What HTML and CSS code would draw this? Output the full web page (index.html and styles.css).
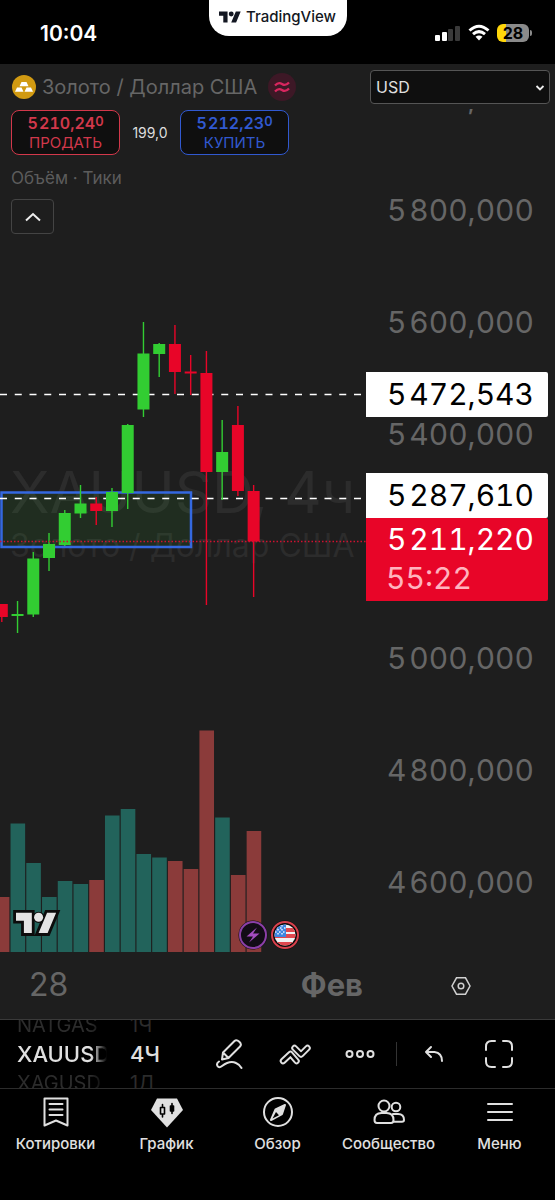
FILE: index.html
```html
<!DOCTYPE html>
<html lang="ru">
<head>
    <meta charset="UTF-8">
    <meta name="viewport" content="width=device-width, initial-scale=1.0">
    <title>XAUUSD, 4ч</title>
    <link rel="stylesheet" href="styles.css">
</head>
<body>
    <header class="status-bar">
        <div class="clock">10:04</div>
        <div class="notch">
            <svg width="22" height="14" viewBox="0 0 36 22" fill="#131722"><path d="M14 20H7V9H0V2h14zM28 20h-8l7.500-18h8z"/><circle cx="20" cy="6" r="4"/></svg>
            <span>TradingView</span>
        </div>
        <div class="status-icons">
            <svg width="26" height="18" viewBox="0 0 26 18" fill="#fff">
                <rect x="0" y="11" width="5" height="6" rx="1"/>
                <rect x="7" y="8" width="5" height="9" rx="1"/>
                <rect x="13" y="5" width="5" height="12" rx="1" fill="#3a3a3a"/>
                <rect x="20" y="2" width="5" height="15" rx="1" fill="#3a3a3a"/>
            </svg>
            <svg width="22" height="18" viewBox="0 0 22 18" fill="none" stroke="#fff" stroke-width="3">
                <path d="M1.500 6.500Q11-2 20.500 6.500M5 10.200Q11 5 17 10.200"/>
                <path d="M7.500 12.800Q11 10 14.500 12.800L11 16.500z" fill="#fff" stroke="none"/>
            </svg>
            <div class="battery">28</div>
        </div>
    </header>

    <main class="chart">
        <div class="plot">
            <div class="watermark">
                <div class="watermark-symbol">XAUUSD, 4ч</div>
                <div class="watermark-name">Золото / Доллар США</div>
            </div>
            <svg class="canvas" id="canvas">
                <g id="volume"></g>
                <rect x="1.500" y="428.500" width="189.500" height="54.500" fill="#32cd32" fill-opacity="0.09" stroke="#3468e0" stroke-width="2.500"/>
                <line x1="0" x2="99%" y1="330.500" y2="330.500" stroke="#fff" stroke-width="1.300" stroke-dasharray="7 7.750"/>
                <line x1="0" x2="99%" y1="434.500" y2="434.500" stroke="#fff" stroke-width="1.300" stroke-dasharray="7 7.750"/>
                <g id="candles"></g>
                <line x1="0" x2="100%" y1="477.500" y2="477.500" stroke="#d01030" stroke-width="1.300" stroke-dasharray="1.500 2"/>

                <!-- логотип -->
                <g transform="translate(16 846.500) scale(1.13)" fill="#e4e4e4" stroke="#0c0c0c" stroke-width="5" paint-order="stroke">
                    <path d="M14 20H7V9H0V2h14zM28 20h-8l7.500-18h8z"/><circle cx="20" cy="6" r="4" stroke-width="2"/>
                </g>

                <!-- события -->
                <g transform="translate(253 871)">
                    <circle r="14.500" fill="#101010"/>
                    <circle r="13" fill="#120c16" stroke="#8b3fa8" stroke-width="2"/>
                    <path d="M4-7.500-6.500 1.500H0L-4 7.500 6.500-1.500H0z" fill="#a34cc0"/>
                </g>
                <g transform="translate(285 871)">
                    <circle r="14.500" fill="#101010"/>
                    <circle r="13" fill="#0c0c0c" stroke="#d9414c" stroke-width="2"/>
                    <clipPath id="flag"><circle r="10.500"/></clipPath>
                    <g clip-path="url(#flag)">
                        <path d="M-11-11h22v22h-22z" fill="#f2f2f2"/>
                        <path d="M-11-7h22v4h-22zM-11-1h22v4h-22zM-11 7h22v4h-22z" fill="#e0484f"/>
                        <path d="M-11-11H1V2h-12z" fill="#3d86e0"/>
                        <path d="M-9-7H1M-10-3H1M-7-10V1M-3-10V1" stroke="#e8f0ff" stroke-width="1.500" stroke-dasharray="1.500 2.500"/>
                    </g>
                </g>
            </svg>

            <div class="legend">
                <div class="legend-title">
                    <svg width="26" height="26" viewBox="0 0 26 26">
                        <circle cx="13" cy="13" r="12" fill="#d19a12"/>
                        <path d="M10.500 8h5l2 4.200h-9zM6 13.500h4.500l2 4.200H4zM15.500 13.500H20l2 4.200h-8.500z" fill="#fff"/>
                    </svg>
                    <span>Золото / Доллар США</span>
                    <svg class="approx" width="28" height="28" viewBox="0 0 28 28">
                        <circle cx="14" cy="14" r="14" fill="#3d1826"/>
                        <path d="M7 12.500q3.500-4 7-1.500t7-1.500M7 18.500q3.500-4 7-1.500t7-1.500" fill="none" stroke="#d8265f" stroke-width="2.200"/>
                    </svg>
                </div>
                <div class="quotes">
                    <button class="quote sell"><b>5&#8202;210,24<sup>0</sup></b><span>ПРОДАТЬ</span></button>
                    <span class="spread">199,0</span>
                    <button class="quote buy"><b>5&#8202;212,23<sup>0</sup></b><span>КУПИТЬ</span></button>
                </div>
                <div class="indicator">Объём · Тики</div>
                <button class="collapse" aria-label="Свернуть">
                    <svg width="18" height="12" viewBox="0 0 18 12" fill="none" stroke="#eee" stroke-width="2"><path d="M2 9.500l7-6.500 7 6.500"/></svg>
                </button>
            </div>
        </div>

        <div class="price-scale">
            <div class="price">6&#8202;000,000</div>
            <div class="price">5&#8202;800,000</div>
            <div class="price">5&#8202;600,000</div>
            <div class="price">5&#8202;400,000</div>
            <div class="price"></div>
            <div class="price">5&#8202;000,000</div>
            <div class="price">4&#8202;800,000</div>
            <div class="price">4&#8202;600,000</div>
            <div class="tag" style="top: 308px">5&#8202;472,543</div>
            <div class="tag" style="top: 409px">5&#8202;287,610</div>
            <div class="tag last" style="top: 454px">5&#8202;211,220<span>55:22</span></div>
            <div class="currency">
                <select aria-label="Валюта"><option>USD</option></select>
                <svg width="10" height="6" viewBox="0 0 10 6" fill="none" stroke="#eee" stroke-width="1.800"><path d="M1.500 1L5 4.500 8.500 1"/></svg>
            </div>
        </div>

        <div class="time-scale">
            <span>28</span>
            <b>Фев</b>
        </div>
        <button class="scale-settings" aria-label="Настройки шкалы">
            <svg width="20" height="20" viewBox="0 0 20 20" fill="none" stroke="#d0d0d0" stroke-width="1.500"><path d="M5.500 1.800h9l4.500 8.200-4.500 8.200h-9L1 10z"/><circle cx="10" cy="10" r="2.800"/></svg>
        </button>
    </main>

    <div class="toolbar">
        <div class="picker symbol">
            <span>NATGAS</span>
            <strong>XAUUSD</strong>
            <span>XAGUSD</span>
        </div>
        <div class="picker interval">
            <span>1Ч</span>
            <strong>4Ч</strong>
            <span>1Д</span>
        </div>
        <button aria-label="Рисование">
            <svg width="30" height="32" viewBox="0 0 30 32"><path d="M7 21.500L8 14.500 19.500 3Q21.500 1.200 24.300 3.800T25 8.500L13.500 20zM8 14.500l5.500 5.500"/><path d="M4 23.500Q1 25.500 2.500 28T7 28Q15 22 21 25 24.500 26.500 26.500 30"/></svg>
        </button>
        <button aria-label="Индикаторы">
            <svg width="32" height="22" viewBox="0 0 32 22">
                <path d="M4 18l7.500-7 6 7M15.500 5l6.500 6.500L28.500 5" stroke-width="6.500"/>
                <path d="M4 18l7.500-7 6 7M15.500 5l6.500 6.500L28.500 5" stroke-width="2.600" class="cut"/>
            </svg>
        </button>
        <button aria-label="Ещё">
            <svg width="30" height="10" viewBox="0 0 30 10"><circle cx="4.500" cy="5" r="3"/><circle cx="15" cy="5" r="3"/><circle cx="25.500" cy="5" r="3"/></svg>
        </button>
        <div class="divider"></div>
        <button aria-label="Отменить">
            <svg width="20" height="18" viewBox="0 0 20 18"><path d="M7 2L2 7l5 5M2 7h8.500Q18 8 18 16"/></svg>
        </button>
        <button aria-label="Во весь экран">
            <svg width="30" height="30" viewBox="0 0 30 30"><path d="M2 11V7.500Q2 2 7.500 2H11M19 2h3.500Q28 2 28 7.500V11M28 19v3.500Q28 28 22.500 28H19M11 28H7.500Q2 28 2 22.500V19"/></svg>
        </button>
    </div>

    <nav class="tabs">
        <a href="#">
            <svg width="32" height="32" viewBox="0 0 32 32"><path d="M4.500 2.500h23v27L16 24.500 4.500 29.500zM9.500 8h13M9.500 13.500h13M9.500 19h13"/></svg>
            <span>Котировки</span>
        </a>
        <a href="#">
            <svg width="32" height="32" viewBox="0 0 32 32"><path d="M6 2.500h20l6 11.500-16 17.500L0 14z" fill="#e0e0e0" stroke="none"/><path d="M9.500 11.500h4v6.500h-4zM11.500 8.500v3M11.500 18v3" stroke="#000" stroke-width="1.600"/><path d="M19.500 10h3v5h-3zM21 7.500v10" fill="#000" stroke="#000" stroke-width="1.600"/></svg>
            <span>График</span>
        </a>
        <a href="#">
            <svg width="32" height="32" viewBox="0 0 32 32"><circle cx="16" cy="16" r="14"/><path d="M23 9l-3 9-11 6 4.500-10.500z" fill="#e0e0e0"/><path d="M10.500 22.500l3.500-6.500 3 3.200z" fill="#000" stroke="none"/></svg>
            <span>Обзор</span>
        </a>
        <a href="#">
            <svg width="32" height="32" viewBox="0 0 32 32"><circle cx="11" cy="10" r="5.500"/><circle cx="23" cy="11" r="4.300"/><path d="M1.500 24q0-7 7-7h5q7 0 7 7 0 3-2.500 3H4q-2.500 0-2.500-3zM20 18h5q6 0 6 6 0 1.800-2 1.800h-8.500"/></svg>
            <span>Сообщество</span>
        </a>
        <a href="#">
            <svg width="32" height="32" viewBox="0 0 32 32"><path d="M4 8h24M4 16h24M4 24h24"/></svg>
            <span>Меню</span>
        </a>
    </nav>

    <script>
        const UP = '#32cd32';
        const DOWN = '#e80528';
        const STEP = 15.74;
        const BOTTOM = 888;

        // [верх тени, верх тела, низ тела, низ тени, рост, верх объёма]
        const bars = [
            [540, 540, 553, 558, 0, 833],
            [537, 550, 552, 569, 1, 759.5],
            [488, 494.5, 550.5, 553, 1, 799],
            [469, 480, 494, 507, 1, 833],
            [446, 449, 481, 482, 1, 817],
            [421, 439.5, 449.5, 454, 1, 820],
            [433, 439.5, 447, 461, 0, 816],
            [424, 428, 447, 463, 1, 751.5],
            [360, 361, 429, 445, 1, 745],
            [258, 289.5, 345.5, 353, 1, 790],
            [279, 280, 290, 313, 1, 793.5],
            [261, 280, 308, 330, 0, 797],
            [291, 307.5, 309.5, 331, 0, 805],
            [287, 309, 408, 541, 0, 666.5],
            [356, 388, 408, 436, 1, 753.5],
            [342, 361, 427, 432, 0, 811],
            [421, 427, 477.5, 533, 0, 767]
        ];

        function addRect(parent, x, y, width, height, fill) {
            const rect = document.createElementNS('http://www.w3.org/2000/svg', 'rect');
            rect.setAttribute('x', x);
            rect.setAttribute('y', y);
            rect.setAttribute('width', width);
            rect.setAttribute('height', height);
            rect.setAttribute('fill', fill);
            parent.appendChild(rect);
        }

        const candles = document.getElementById('candles');
        const volume = document.getElementById('volume');

        bars.forEach(([high, top, bottom, low, up, vol], i) => {
            const center = 1.8 + STEP * i;
            const color = up ? UP : DOWN;
            addRect(candles, center - 0.7, high, 1.4, low - high, color);
            addRect(candles, center - 6, top, 12, bottom - top, color);
            addRect(volume, center - 7, vol, 14.6, BOTTOM - vol, up ? '#22635b' : '#8b3b3a');
        });
    </script>
</body>
</html>
```
FILE: styles.css
```css
* {
    margin: 0;
    padding: 0;
    box-sizing: border-box;
}

body {
    font-family: Inter, 'Liberation Sans', sans-serif;
    background-color: #000;
    color: #e0e0e0;
    min-height: 100vh;
    display: flex;
    flex-direction: column;
}

button {
    font: inherit;
    color: inherit;
    background: none;
    border: none;
    cursor: pointer;
}

svg {
    flex: none;
}

/* Строка состояния */
.status-bar {
    display: grid;
    grid-template-columns: 1fr 138px 1fr;
    height: 64px;
    align-items: center;
    color: #fff;
}

.clock {
    padding: 2px 0 0 40px;
    font-size: 21px;
    font-weight: 600;
}

.notch {
    align-self: start;
    display: flex;
    align-items: center;
    justify-content: center;
    gap: 5px;
    height: 36px;
    padding-bottom: 3px;
    border-radius: 0 0 20px 20px;
    background-color: #fff;
    color: #131722;
    font-size: 15px;
    font-weight: 500;
}

.status-icons {
    display: flex;
    align-items: center;
    justify-content: flex-end;
    gap: 7px;
    padding: 2px 26px 0 0;
}

.battery {
    position: relative;
    width: 32px;
    height: 18px;
    border-radius: 6px;
    background: linear-gradient(90deg, #ffd60a 28%, #8a8a8a 28%);
    color: #000;
    font-size: 16px;
    font-weight: 700;
    line-height: 18px;
    text-align: center;
}

.battery::after {
    content: '';
    position: absolute;
    left: 33px;
    top: 6px;
    width: 2px;
    height: 6px;
    border-radius: 0 2px 2px 0;
    background-color: #8a8a8a;
}

/* График */
.chart {
    display: grid;
    grid-template-columns: 1fr 189px;
    grid-template-rows: 888px 67px;
    flex: 1;
    background-color: #1e1e1e;
    overflow: hidden;
}

.plot,
.price-scale {
    position: relative;
}

.canvas {
    position: relative;
    display: block;
    width: 100%;
    height: 100%;
}

.watermark {
    position: absolute;
    left: 10px;
    top: 392px;
    color: #2c2c2c;
    white-space: nowrap;
}

.watermark-symbol {
    font-size: 58px;
    line-height: 72px;
}

.watermark-name {
    font-size: 32px;
    line-height: 36px;
}

.legend {
    position: absolute;
    left: 11px;
    top: 9px;
    display: flex;
    flex-direction: column;
    align-items: flex-start;
}

.legend-title {
    display: flex;
    align-items: center;
    gap: 5px;
    color: #666;
    font-size: 20px;
    line-height: 28px;
    white-space: nowrap;
}

.approx {
    margin-left: 6px;
}

.quotes {
    display: flex;
    align-items: center;
    margin-top: 9px;
}

.quote {
    display: flex;
    flex-direction: column;
    align-items: center;
    justify-content: center;
    width: 109px;
    height: 45px;
    border: 1px solid;
    border-radius: 8px;
    background-color: #0f0f0f;
    font-size: 15px;
    line-height: 19px;
}

.quote b {
    font-size: 16px;
    font-weight: 600;
    font-variant-numeric: tabular-nums;
}

.quote sup {
    font-size: 13px;
    line-height: 1px;
    vertical-align: 3px;
}

.sell {
    color: #d2384b;
}

.buy {
    color: #3159d0;
}

.spread {
    width: 60px;
    color: #ddd;
    font-size: 14px;
    text-align: center;
}

.indicator {
    margin-top: 13px;
    color: #5c5c5c;
    font-size: 17px;
    line-height: 20px;
}

.collapse {
    display: flex;
    align-items: center;
    justify-content: center;
    width: 43px;
    height: 35px;
    margin-top: 11px;
    border: 1px solid #444;
    border-radius: 4px;
}

/* Шкала цен */
.price-scale {
    display: flex;
    flex-direction: column;
    margin-top: -22px;
    padding-right: 21px;
    color: #666;
    font-size: 30px;
    text-align: right;
    white-space: nowrap;
    font-variant-numeric: tabular-nums;
}

.price {
    height: 112px;
    line-height: 112px;
}

.tag {
    position: absolute;
    left: 0;
    right: 7px;
    margin-top: 22px;
    padding: 0 14px 0 20px;
    border-radius: 0 2px 2px 0;
    background-color: #fff;
    color: #000;
    line-height: 45px;
}

.tag.last {
    padding-bottom: 5px;
    background-color: #e80528;
    color: #fff;
    line-height: 42px;
}

.tag span {
    display: block;
    color: #ffb3be;
    line-height: 36px;
    text-align: left;
}

.currency {
    position: absolute;
    left: 0;
    right: 0;
    top: 22px;
    padding: 6px 5px 5px 4px;
    background-color: #1e1e1e;
    font-size: 0;
}

.currency select {
    appearance: none;
    width: 100%;
    height: 34px;
    padding: 0 5px;
    border: 1px solid #555;
    border-radius: 4px;
    background-color: #0f0f0f;
    color: #e0e0e0;
    font-family: inherit;
    font-size: 16px;
}

.currency svg {
    position: absolute;
    right: 10px;
    top: 21px;
    pointer-events: none;
}

.time-scale {
    display: flex;
    align-items: center;
    justify-content: space-between;
    padding: 0 3px 2px 29px;
    color: #666;
    font-size: 32px;
}

.time-scale b {
    font-size: 31px;
}

.scale-settings {
    display: flex;
    align-items: center;
    justify-content: center;
}

/* Панель инструментов */
.toolbar {
    display: flex;
    align-items: center;
    height: 70px;
    border-top: 1px solid #3a3a3a;
    border-bottom: 1px solid #2c2c2c;
    overflow: hidden;
}

.picker {
    display: flex;
    flex-direction: column;
    justify-content: center;
    height: 68px;
    overflow: hidden;
    font-size: 20px;
    line-height: 28px;
}

.picker span {
    color: #2c2c2c;
    flex: none;
}

.picker strong {
    flex: none;
    font-size: 22px;
    font-weight: 500;
    line-height: 30px;
}

.symbol {
    width: 90px;
    margin: 0 23px 0 17px;
    mask-image: linear-gradient(90deg, #000 82%, transparent);
}

.interval {
    width: 68px;
}

.toolbar button {
    display: flex;
    align-items: center;
    justify-content: center;
    flex: 1;
    height: 68px;
}

.toolbar svg,
.tabs svg {
    fill: none;
    stroke: #e0e0e0;
    stroke-width: 2;
    stroke-linecap: round;
    stroke-linejoin: round;
}

.toolbar .cut {
    stroke: #000;
}

.divider {
    width: 1px;
    height: 24px;
    margin: 0 4px;
    background-color: #333;
}

.toolbar button:last-child {
    margin-right: 24px;
}

/* Нижнее меню */
.tabs {
    display: grid;
    grid-template-columns: repeat(5, 1fr);
    height: 111px;
    padding-top: 7px;
}

.tabs a {
    display: flex;
    flex-direction: column;
    align-items: center;
    gap: 6px;
    color: #e0e0e0;
    font-size: 15px;
    font-weight: 500;
    line-height: 20px;
    text-decoration: none;
}
```
